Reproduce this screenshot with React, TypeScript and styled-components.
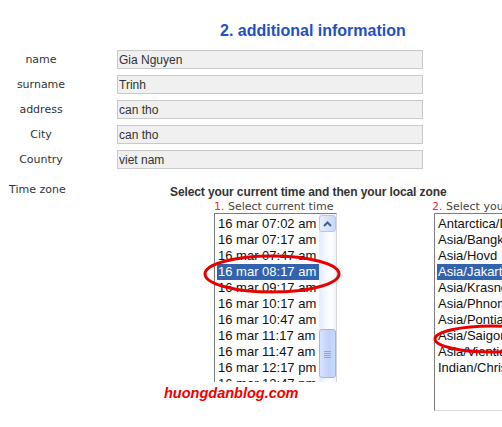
import React from "react";
import styled, { createGlobalStyle } from "styled-components";

const Global = createGlobalStyle`
  html, body { margin: 0; padding: 0; background: #fff; overflow: hidden; }
  body { font-family: "Liberation Sans", Arial, sans-serif; }
`;

const Page = styled.div`
  position: relative;
  width: 502px;
  height: 427px;
  overflow: hidden;
  background: #fff;
`;

const Title = styled.h2`
  margin: 0;
  padding: 21px 0 0 220px;
  font: bold 16px/19px "Liberation Sans", Arial, sans-serif;
  color: #1f50c0;
  white-space: nowrap;
`;

const FormGrid = styled.div`
  margin-top: 10px;
  display: grid;
  grid-template-columns: 82px 306px;
  grid-auto-rows: 19px;
  column-gap: 35px;
  row-gap: 6px;
`;

const FieldLabel = styled.label`
  align-self: center;
  text-align: center;
  font: 11px/13px "DejaVu Sans", Verdana, sans-serif;
  color: #333;
`;

const TextBox = styled.input`
  box-sizing: border-box;
  width: 306px;
  height: 19px;
  margin: 0;
  padding: 0 0 0 1px;
  border: 1px solid #c9c9c9;
  background: #f0f0f0;
  font: 12px "Liberation Sans", Arial, sans-serif;
  color: #333;
  outline: none;
`;

const TzRow = styled.div`
  margin-top: 14px;
  display: flex;
`;

const TzLabel = styled.div`
  box-sizing: border-box;
  flex: 0 0 170px;
  padding-left: 9px;
  font: 11px/13px "DejaVu Sans", Verdana, sans-serif;
  color: #333;
`;

const TzContent = styled.div`
  display: flex;
  flex-direction: column;
  padding-top: 2px;
`;

const TzHeading = styled.div`
  font: bold 12px/14px "Liberation Sans", Arial, sans-serif;
  letter-spacing: -0.1px;
  color: #333;
  white-space: nowrap;
`;

const ListsRow = styled.div`
  display: flex;
  margin-top: 2px;
  padding-left: 44px;
  gap: 95px;
`;

const ListColumn = styled.div<{ $w?: number }>`
  display: flex;
  flex-direction: column;
  flex: 0 0 ${(p) => (p.$w ? `${p.$w}px` : "auto")};
`;

const ListCaption = styled.div`
  font: 11px/12px "DejaVu Sans", Verdana, sans-serif;
  color: #444;
  white-space: nowrap;
`;

const Num = styled.span`
  color: #ff2a2a;
`;

const ListBox = styled.div<{ $w: number; $h: number; $offset?: number; $open?: boolean }>`
  box-sizing: border-box;
  width: ${(p) => p.$w}px;
  height: ${(p) => p.$h}px;
  margin-left: ${(p) => p.$offset ?? 0}px;
  border: 1px solid;
  border-color: #7c7c7c #d6d6d6 #d6d6d6 #7c7c7c;
  border-bottom-width: ${(p) => (p.$open ? 0 : 1)}px;
  display: flex;
  background: #fff;
  overflow: hidden;
`;

const Rows = styled.div`
  flex: 1;
  min-width: 0;
  padding: 2px 0 0 2px;
  overflow: hidden;
`;

const Row = styled.div<{ $selected?: boolean }>`
  height: 16px;
  padding-left: 1px;
  font: 13px/16px "Liberation Sans", Arial, sans-serif;
  white-space: nowrap;
  color: ${(p) => (p.$selected ? "#fff" : "#111")};
  background: ${(p) => (p.$selected ? "#3363ad" : "transparent")};
`;

const ScrollBar = styled.div`
  flex: 0 0 17px;
  display: flex;
  flex-direction: column;
  background: linear-gradient(to right, #e4ebfa 0%, #f7f9fe 45%, #fdfeff 70%, #eef3fc 100%);
`;

const ScrollButton = styled.div`
  box-sizing: border-box;
  height: 17px;
  margin-top: 1px;
  border: 1px solid #b4c7ee;
  border-radius: 3px;
  background: linear-gradient(to right, #e8effd, #c8d8fa);
  display: flex;
  align-items: center;
  justify-content: center;
`;

const Thumb = styled.div`
  box-sizing: border-box;
  height: 49px;
  margin-top: 97px;
  border: 1px solid #9fb5e3;
  border-radius: 3px;
  background: linear-gradient(to right, #d8e4fd, #bfd1fa 60%, #c9d9fb);
  display: flex;
  align-items: center;
  justify-content: center;
`;

const Watermark = styled.div`
  position: absolute;
  left: 164px;
  top: 386px;
  font: italic bold 14.5px/15px "Liberation Sans", Arial, sans-serif;
  color: #ee0000;
  white-space: nowrap;
`;

const Marks = styled.svg`
  position: absolute;
  left: 0;
  top: 0;
  pointer-events: none;
`;

const fields: [string, string][] = [
  ["name", "Gia Nguyen"],
  ["surname", "Trinh"],
  ["address", "can tho"],
  ["City", "can tho"],
  ["Country", "viet nam"],
];

const times = [
  "16 mar 07:02 am",
  "16 mar 07:17 am",
  "16 mar 07:47 am",
  "16 mar 08:17 am",
  "16 mar 09:17 am",
  "16 mar 10:17 am",
  "16 mar 10:47 am",
  "16 mar 11:17 am",
  "16 mar 11:47 am",
  "16 mar 12:17 pm",
  "16 mar 12:47 pm",
];

const zones = [
  "Antarctica/Davis",
  "Asia/Bangkok",
  "Asia/Hovd",
  "Asia/Jakarta",
  "Asia/Krasnoyarsk",
  "Asia/Phnom_Penh",
  "Asia/Pontianak",
  "Asia/Saigon",
  "Asia/Vientiane",
  "Indian/Christmas",
];

export default function App() {
  return (
    <Page>
      <Global />
      <Title>2. additional information</Title>
      <FormGrid>
        {fields.map(([label, value]) => (
          <React.Fragment key={label}>
            <FieldLabel>{label}</FieldLabel>
            <TextBox readOnly defaultValue={value} />
          </React.Fragment>
        ))}
      </FormGrid>
      <TzRow>
        <TzLabel>Time zone</TzLabel>
        <TzContent>
          <TzHeading>Select your current time and then your local zone</TzHeading>
          <ListsRow>
            <ListColumn $w={123}>
              <ListCaption>
                <Num>1.</Num> Select current time
              </ListCaption>
              <ListBox $w={123} $h={169} $open>
                <Rows>
                  {times.map((t, i) => (
                    <Row key={t} $selected={i === 3}>
                      {t}
                    </Row>
                  ))}
                </Rows>
                <ScrollBar>
                  <ScrollButton>
                    <svg width="9" height="6" viewBox="0 0 9 6">
                      <path d="M1 5 L4.5 1.5 L8 5" fill="none" stroke="#4a5f86" strokeWidth="2" />
                    </svg>
                  </ScrollButton>
                  <Thumb>
                    <svg width="7" height="8" viewBox="0 0 7 8">
                      <path d="M0 1.5h7M0 3.5h7M0 5.5h7M0 7.5h7" stroke="#8ea5d6" strokeWidth="1" />
                    </svg>
                  </Thumb>
                </ScrollBar>
              </ListBox>
            </ListColumn>
            <ListColumn>
              <ListCaption>
                <Num>2.</Num> Select your local zone
              </ListCaption>
              <ListBox $w={150} $h={198} $offset={2}>
                <Rows>
                  {zones.map((z, i) => (
                    <Row key={z} $selected={i === 3}>
                      {z}
                    </Row>
                  ))}
                </Rows>
              </ListBox>
            </ListColumn>
          </ListsRow>
        </TzContent>
      </TzRow>
      <Watermark>huongdanblog.com</Watermark>
      <Marks width="502" height="427" viewBox="0 0 502 427">
        <ellipse cx="272" cy="274" rx="67" ry="18" fill="none" stroke="#e60000" strokeWidth="3" />
        <ellipse cx="492" cy="339" rx="57" ry="13" fill="none" stroke="#e60000" strokeWidth="3" />
      </Marks>
    </Page>
  );
}
